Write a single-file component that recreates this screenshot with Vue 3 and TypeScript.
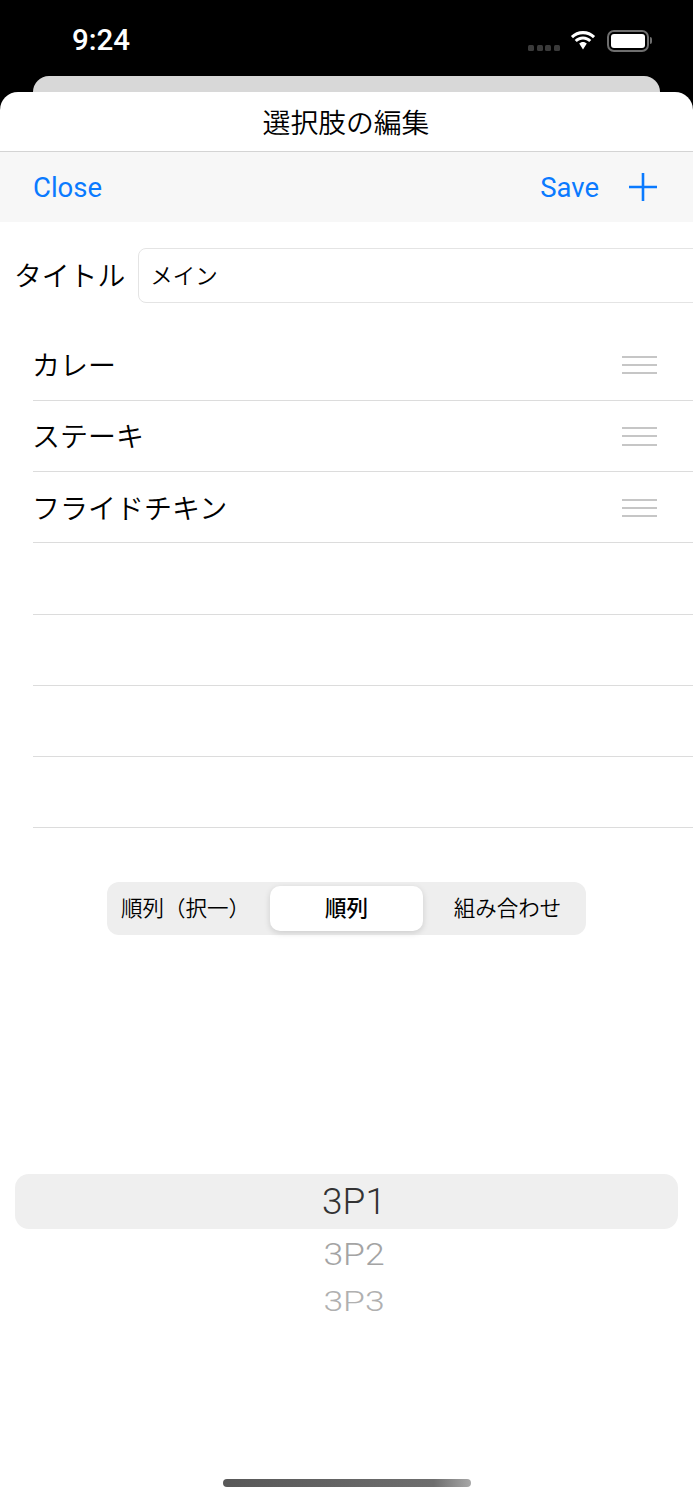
<script setup lang="ts">
const rows: string[] = ['カレー', 'ステーキ', 'フライドチキン', '', '', '', '']
const segments: string[] = ['順列（択一）', '順列', '組み合わせ']
const selected = 1
</script>

<template>
  <div class="screen">
    <div class="status">
      <span class="time">9:24</span>
      <div class="status-icons">
        <div class="signal"><i></i><i></i><i></i><i></i></div>
        <svg class="wifi" width="28" height="20" viewBox="0 0 28 20">
          <path d="M14 4.200c3.900 0 7.400 1.500 10 4l2.100-2.200C23 2.900 18.700 1 14 1S5 2.900 1.900 6L4 8.200c2.600-2.500 6.100-4 10-4z" fill="#fff" />
          <path d="M14 9.600c2.400 0 4.600.9 6.200 2.500l2.100-2.200C20.100 7.800 17.200 6.500 14 6.500s-6.100 1.300-8.300 3.400l2.100 2.200c1.600-1.600 3.800-2.500 6.200-2.500z" fill="#fff" />
          <path d="M14 12c-1.500 0-2.800.6-3.800 1.500L14 19.500l3.800-6c-1-.9-2.300-1.500-3.800-1.500z" fill="#fff" />
        </svg>
        <div class="battery"><div class="battery-fill"></div></div>
        <div class="battery-cap"></div>
      </div>
    </div>
    <div class="peek"></div>
    <div class="sheet">
      <div class="title"><span>選択肢の編集</span></div>
      <div class="toolbar">
        <span class="action">Close</span>
        <div class="toolbar-right">
          <span class="action">Save</span>
          <svg class="plus" width="30" height="30" viewBox="0 0 30 30">
            <path d="M15 1v28M1 15h28" stroke="#0a7aff" stroke-width="2.600" fill="none" />
          </svg>
        </div>
      </div>
      <div class="field-row">
        <span class="field-label">タイトル</span>
        <input class="field-input" value="メイン" readonly />
      </div>
      <ul class="list">
        <li v-for="(row, i) in rows" :key="i" class="row">
          <span class="row-text">{{ row }}</span>
          <div v-if="row" class="handle"><i></i><i></i><i></i></div>
        </li>
      </ul>
      <div class="segment-wrap">
        <div class="segment">
          <div
            v-for="(seg, i) in segments"
            :key="seg"
            class="seg"
            :class="{ active: i === selected }"
          ><span>{{ seg }}</span></div>
        </div>
      </div>
      <div class="picker">
        <div class="pick pick-1">3P1</div>
        <div class="pick pick-2">3P2</div>
        <div class="pick pick-3">3P3</div>
      </div>
      <div class="home-wrap"><div class="home"></div></div>
    </div>
  </div>
</template>

<style>
html, body { margin: 0; background: #000; }
</style>

<style scoped>
.screen {
  width: 693px;
  height: 1500px;
  background: #000;
  overflow: hidden;
  display: flex;
  flex-direction: column;
  font-family: "Inter", "Noto Sans CJK JP", sans-serif;
  font-weight: 350;
  color: #000;
}
.status {
  height: 76px;
  box-sizing: border-box;
  padding: 22px 41px 0 72px;
  display: flex;
  justify-content: space-between;
  align-items: flex-start;
}
.time {
  color: #fff;
  font-size: 29.500px;
  line-height: 36px;
  font-weight: 500;
  font-family: "Roboto", sans-serif;
}
.status-icons {
  display: flex;
  align-items: center;
  height: 36px;
}
.signal {
  display: flex;
  gap: 2.700px;
  margin-top: 16px;
  margin-right: 9px;
}
.signal i {
  width: 6px;
  height: 6px;
  border-radius: 1.500px;
  background: #3a3a3a;
}
.wifi { margin-right: 10px; margin-top: -1px; }
.battery {
  width: 42px;
  height: 22px;
  box-sizing: border-box;
  border: 2px solid #6e6e6e;
  border-radius: 7px;
  padding: 2px;
  margin-top: 1px;
}
.battery-fill {
  height: 100%;
  background: #fff;
  border-radius: 3px;
}
.battery-cap {
  width: 2px;
  height: 7px;
  margin-left: 1px;
  margin-top: 1px;
  background: #6e6e6e;
  border-radius: 0 2px 2px 0;
}
.peek {
  height: 16px;
  margin: 0 33px;
  background: #d8d8d8;
  border-radius: 16px 16px 0 0;
}
.sheet {
  flex: 1;
  background: #fff;
  border-radius: 18px 18px 0 0;
  overflow: hidden;
  display: flex;
  flex-direction: column;
}
.title {
  height: 58px;
  padding: 0 1px 1px 0;
  border-bottom: 1px solid #d4d4d4;
  display: flex;
  align-items: center;
  justify-content: center;
  font-size: 27.800px;
}
.toolbar {
  height: 70px;
  background: #f7f7f7;
  display: flex;
  justify-content: space-between;
  align-items: center;
  padding: 0 35px 0 33px;
}
.toolbar-right {
  display: flex;
  align-items: center;
  gap: 29px;
}
.action {
  color: #0a7aff;
  font-size: 27.500px;
  font-weight: 400;
  font-family: "Roboto", sans-serif;
}
.plus { display: block; }
.field-row {
  display: flex;
  align-items: center;
  margin-top: 26px;
  padding-left: 14px;
  gap: 13px;
  height: 55px;
  flex-shrink: 0;
}
.field-label {
  font-size: 27.800px;
  line-height: 57px;
  padding-top: 2px;
  white-space: nowrap;
}
.field-input {
  flex: none;
  width: 600px;
  height: 55px;
  box-sizing: border-box;
  border: 1px solid #e4e4e4;
  border-radius: 8px;
  padding: 0 11px 3px;
  font-size: 22.500px;
  font-family: inherit;
  font-weight: inherit;
  color: #000;
  outline: none;
  background: #fff;
}
.list {
  list-style: none;
  margin: 26.600px 0 0 33px;
  padding: 0;
}
.row {
  height: 71.250px;
  box-sizing: border-box;
  border-bottom: 1px solid #dcdcdc;
  display: flex;
  align-items: center;
  justify-content: space-between;
  padding-right: 36px;
}
.row-text {
  font-size: 28px;
  line-height: 44px;
  margin-left: -1px;
  padding-top: 3px;
}
.handle {
  display: flex;
  flex-direction: column;
  gap: 6.200px;
  padding-top: 1px;
}
.handle i {
  display: block;
  width: 35px;
  height: 2px;
  background: #c6c6c6;
}
.segment-wrap {
  display: flex;
  justify-content: center;
  margin-top: 53.400px;
}
.segment {
  width: 479px;
  height: 53px;
  box-sizing: border-box;
  padding: 4px;
  background: #eeeeee;
  border-radius: 12px;
  display: grid;
  grid-template-columns: 1fr 153px 1fr;
  align-items: stretch;
}
.seg {
  display: flex;
  align-items: center;
  justify-content: center;
  font-size: 21.500px;
  line-height: 41px;
  white-space: nowrap;
  border-radius: 10px;
}
.seg:first-child { padding-right: 10px; }
.seg:last-child { padding-left: 10px; }
.seg.active {
  background: #fff;
  font-weight: 500;
  box-shadow: 0 2px 6px rgba(0, 0, 0, 0.14);
}
.picker {
  margin: 239px 15px 0;
  display: flex;
  flex-direction: column;
  align-items: center;
}
.pick {
  font-family: "Roboto", sans-serif;
  font-weight: 350;
  width: 100%;
  text-align: center;
  padding-left: 15px;
  box-sizing: border-box;
}
.pick-1 {
  height: 55px;
  line-height: 55px;
  font-size: 37px;
  color: #333;
  background: #efefef;
  border-radius: 14px;
}
.pick-2 {
  height: 50px;
  line-height: 50px;
  font-size: 35.500px;
  color: #a4a4a4;
  transform: scaleY(0.9);
}
.pick-3 {
  height: 44px;
  line-height: 44px;
  font-size: 35.500px;
  color: #b0b0b0;
  transform: scaleY(0.8);
}
.home-wrap {
  margin-top: auto;
  padding-bottom: 13px;
  display: flex;
  justify-content: center;
}
.home {
  width: 248px;
  height: 8px;
  border-radius: 4px;
  background: linear-gradient(90deg, #585858, #6e6e6e 85%, #a8a8a8);
}
</style>
